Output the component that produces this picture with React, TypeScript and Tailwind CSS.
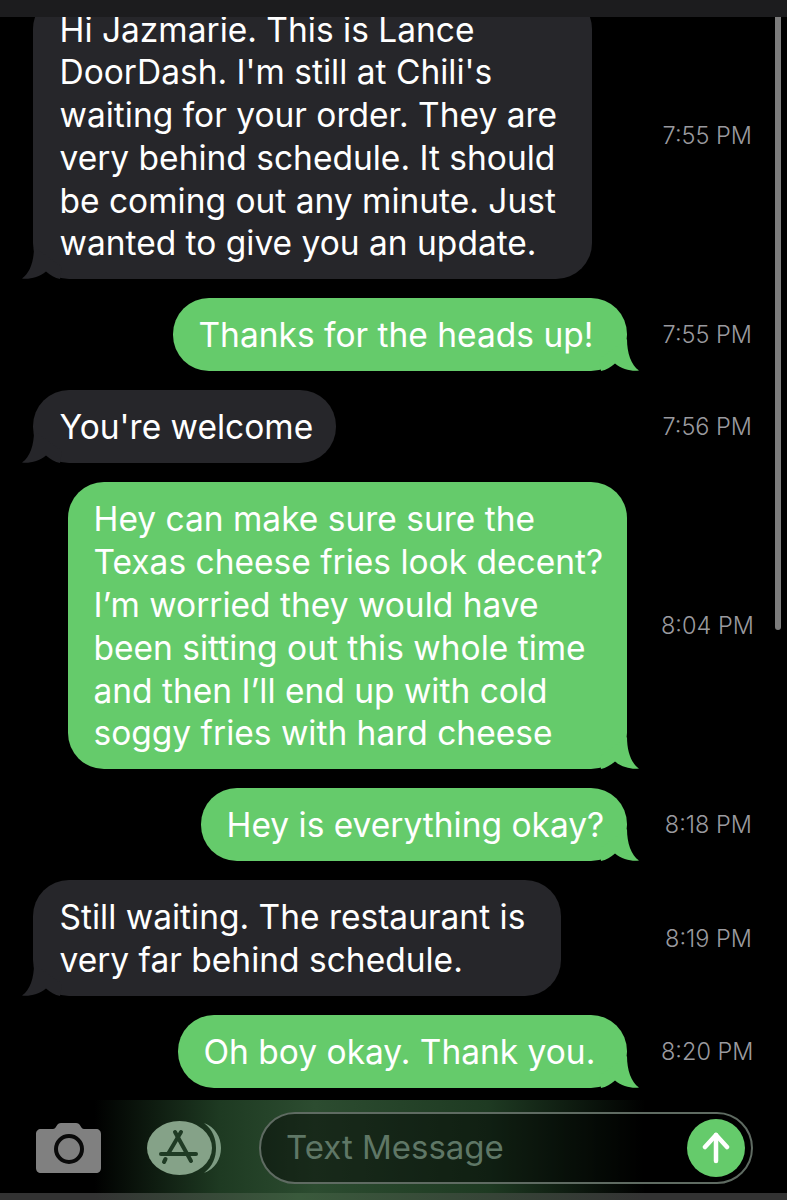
import React from "react";

type Msg = {
  from: "them" | "me";
  time: string;
  width: number;
  lines: string[];
};

const messages: Msg[] = [
  {
    from: "them",
    time: "7:55 PM",
    width: 559,
    lines: [
      "Hi Jazmarie. This is Lance",
      "DoorDash. I'm still at Chili's",
      "waiting for your order. They are",
      "very behind schedule. It should",
      "be coming out any minute. Just",
      "wanted to give you an update.",
    ],
  },
  { from: "me", time: "7:55 PM", width: 454, lines: ["Thanks for the heads up!"] },
  { from: "them", time: "7:56 PM", width: 303, lines: ["You're welcome"] },
  {
    from: "me",
    time: "8:04 PM",
    width: 559,
    lines: [
      "Hey can make sure sure the",
      "Texas cheese fries look decent?",
      "I’m worried they would have",
      "been sitting out this whole time",
      "and then I’ll end up with cold",
      "soggy fries with hard cheese",
    ],
  },
  { from: "me", time: "8:18 PM", width: 426, lines: ["Hey is everything okay?"] },
  {
    from: "them",
    time: "8:19 PM",
    width: 528,
    lines: ["Still waiting. The restaurant is", "very far behind schedule."],
  },
  { from: "me", time: "8:20 PM", width: 449, lines: ["Oh boy okay. Thank you."] },
];

function Tail({ side, color }: { side: "left" | "right"; color: string }) {
  // The hook at the bubble's bottom corner; the left one is a mirror of the right
  const cls = side === "right" ? "absolute right-[-12px] bottom-0" : "absolute left-[-11px] bottom-0 -scale-x-100";
  return (
    <svg className={cls} width="40" height="32" viewBox="0 0 40 32">
      <path d="M28 0C28 14 32 26 40 31.500C33 32.500 23 30.500 16 24.500C12 28 7 31 2 32L0 20Z" fill={color} />
    </svg>
  );
}

function Bubble({ msg }: { msg: Msg }) {
  const mine = msg.from === "me";
  const color = mine ? "#65CB6B" : "#26262A";
  return (
    <div className={mine ? "flex flex-1 justify-end" : "flex flex-1 justify-start"}>
      <div
        className={
          mine
            ? "relative rounded-[36px] bg-[#65CB6B] pt-[16px] pb-[14.200px] pl-[25.500px] text-[33.500px] leading-[42.800px] text-white whitespace-nowrap"
            : "relative rounded-[36px] bg-[#26262A] pt-[16px] pb-[14.200px] pl-[26.500px] text-[33.500px] leading-[42.800px] text-white whitespace-nowrap"
        }
        style={{ width: msg.width }}
      >
        {msg.lines.map((line) => (
          <div key={line}>{line}</div>
        ))}
        <Tail side={mine ? "right" : "left"} color={color} />
      </div>
    </div>
  );
}

function CameraIcon() {
  return (
    <svg width="65" height="50" viewBox="0 0 65 50">
      <path
        d="M5 6H17C18.500 6 19.500 5 20.500 3C21.500 1 23 0 25 0H40C42 0 43.500 1 44.500 3C45.500 5 46.500 6 48 6H60C63 6 65 8 65 11V45C65 48 63 50 60 50H5C2 50 0 48 0 45V11C0 8 2 6 5 6Z"
        fill="#808080"
      />
      <circle cx="33" cy="26" r="13" fill="none" stroke="#0A0A0A" strokeWidth="4" />
    </svg>
  );
}

function AppsIcon() {
  return (
    <svg width="74" height="54" viewBox="0 0 74 54">
      <path d="M57 2C66 9 69 18 69 27C69 36 66 45 57 52C68 48 74 38 74 27C74 16 68 6 57 2Z" fill="#7E9C83" />
      <ellipse cx="32.500" cy="27" rx="32.500" ry="27" fill="#85A288" />
      <g fill="none" stroke="#1F3B24" strokeWidth="4" strokeLinecap="round">
        <path d="M34 11L21 33" />
        <path d="M18.500 38L17 41" />
        <path d="M28 11L44 40" />
        <path d="M14 33H49" />
      </g>
    </svg>
  );
}

function SendArrow() {
  return (
    <svg width="28" height="32" viewBox="0 0 28 32" fill="none" stroke="#FFFFFF" strokeWidth="4.500" strokeLinecap="round" strokeLinejoin="round">
      <path d="M14 29V3" />
      <path d="M3 15L14 3L25 15" />
    </svg>
  );
}

export default function App() {
  return (
    <div className="relative flex h-[1200px] w-[787px] flex-col overflow-hidden bg-black font-['Inter','Liberation_Sans',sans-serif]">
      <div className="relative z-10 h-[17px] shrink-0 bg-[#1C1C1E]" />

      <main className="min-h-0 flex-1 overflow-hidden">
        <div className="mt-[-24.500px] flex flex-col gap-[19px]">
          {messages.map((m, i) => (
            <div key={i} className="flex items-center gap-[34px] pl-[33px] pr-[35px]">
              <Bubble msg={m} />
              <span className="w-[91px] shrink-0 text-right text-[23.500px] font-light whitespace-nowrap text-[#9A9A9F]">{m.time}</span>
            </div>
          ))}
        </div>
      </main>

      {/* scroll indicator */}
      <div className="absolute left-[775px] top-[17px] h-[613px] w-[6px] rounded-b-full bg-[#7C7C7C]" />

      <footer className="flex h-[93px] shrink-0 items-center bg-[linear-gradient(to_right,#000_12%,#1E3A22_28%,#2C4C30_40%,#1E3A22_62%,#000_82%)] pt-[3px] pl-[36px] pr-[34px]">
        <CameraIcon />
        <div className="ml-[46px]">
          <AppsIcon />
        </div>
        <div className="ml-[38px] flex h-[72px] flex-1 items-center justify-between rounded-full border-2 border-[#5F6B62] bg-black/45 pl-[25px] pr-[6px]">
          <span className="text-[33px] text-[#5F7766]">Text Message</span>
          <span className="flex h-[58px] w-[58px] items-center justify-center rounded-full bg-[#65CB6B]">
            <SendArrow />
          </span>
        </div>
      </footer>
      <div className="h-[7px] shrink-0 bg-[linear-gradient(to_right,#333_12%,#3A5A3C_38%,#333_82%)]" />
    </div>
  );
}
